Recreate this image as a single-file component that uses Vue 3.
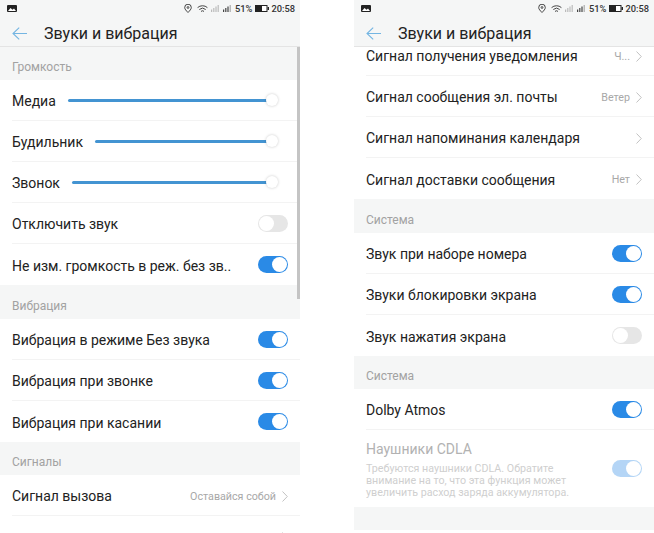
<script setup>
const volumeRows = [
  { label: 'Медиа', type: 'slider' },
  { label: 'Будильник', type: 'slider' },
  { label: 'Звонок', type: 'slider' },
  { label: 'Отключить звук', type: 'toggle', on: false },
  { label: 'Не изм. громкость в реж. без зв..', type: 'toggle', on: true }
]

const vibrationRows = [
  { label: 'Вибрация в режиме Без звука', type: 'toggle', on: true },
  { label: 'Вибрация при звонке', type: 'toggle', on: true },
  { label: 'Вибрация при касании', type: 'toggle', on: true }
]

const signalRows = [
  { label: 'Сигнал получения уведомления', value: 'Ч...' },
  { label: 'Сигнал сообщения эл. почты', value: 'Ветер' },
  { label: 'Сигнал напоминания календаря', value: '' },
  { label: 'Сигнал доставки сообщения', value: 'Нет' }
]

const systemRows = [
  { label: 'Звук при наборе номера', on: true },
  { label: 'Звуки блокировки экрана', on: true },
  { label: 'Звук нажатия экрана', on: false }
]
</script>

<template>
  <div class="page">
    <div v-for="screen in 2" :key="screen" class="phone">
      <header class="top">
        <div class="status">
          <svg class="pic" width="10" height="7" viewBox="0 0 10 7">
            <rect width="10" height="7" rx="1" fill="#222" />
            <path d="M1 6l2.5-3 2 1.8L7 3.5 9 6z" fill="#fff" />
          </svg>
          <svg class="loc" width="8" height="9" viewBox="0 0 8 9" fill="none" stroke="#444" stroke-width="1">
            <path d="M4 8.5C2.2 6.6.7 5.2.7 3.5a3.3 3.3 0 0 1 6.6 0C7.3 5.2 5.8 6.6 4 8.5z" />
            <circle cx="4" cy="3.5" r=".9" />
          </svg>
          <svg class="wifi" width="11" height="8" viewBox="0 0 11 8" fill="none" stroke="#444" stroke-width="1">
            <path d="M.6 2.6a7.4 7.4 0 0 1 9.8 0M2.3 4.5a4.8 4.8 0 0 1 6.4 0M4 6.4a2.3 2.3 0 0 1 3 0" />
          </svg>
          <svg class="sig" width="10" height="7" viewBox="0 0 10 7" fill="#bbb">
            <rect x="0" y="4.5" width="1.2" height="2.5" /><rect x="2.2" y="3" width="1.2" height="4" />
            <rect x="4.4" y="1.5" width="1.2" height="5.5" /><rect x="6.6" y="0" width="1.2" height="7" />
          </svg>
          <svg class="sig" width="10" height="7" viewBox="0 0 10 7" fill="#444">
            <rect x="0" y="4.5" width="1.2" height="2.5" /><rect x="2.2" y="3" width="1.2" height="4" />
            <rect x="4.4" y="1.5" width="1.2" height="5.5" /><rect x="6.6" y="0" width="1.2" height="7" fill="#aaa" />
          </svg>
          <span class="stat-text">51%</span>
          <svg class="batt" width="14" height="7" viewBox="0 0 14 7">
            <rect x=".5" y=".5" width="11.5" height="6" fill="#fff" stroke="#222" />
            <rect x="1" y="1" width="6" height="5" fill="#222" />
            <rect x="12.5" y="2" width="1.5" height="3" fill="#222" />
          </svg>
          <span class="stat-text">20:58</span>
        </div>
        <div class="bar">
          <svg width="15" height="13" viewBox="0 0 15 13" fill="none" stroke="#74b5e2" stroke-width="1.1">
            <path d="M15 6.5H1M7.2.6 1 6.5l6.2 5.9" />
          </svg>
          <span class="title">Звуки и вибрация</span>
        </div>
      </header>

      <main v-if="screen === 1" class="list">
        <div class="scrollbar"></div>
        <div class="section">Громкость</div>
        <div v-for="row in volumeRows" :key="row.label" class="row">
          <span class="label">{{ row.label }}</span>
          <div v-if="row.type === 'slider'" class="slider"><i class="knob"></i></div>
          <span v-else class="switch" :class="{ on: row.on }"><i></i></span>
        </div>
        <div class="section tall">Вибрация</div>
        <div v-for="row in vibrationRows" :key="row.label" class="row">
          <span class="label">{{ row.label }}</span>
          <span class="switch on"><i></i></span>
        </div>
        <div class="section">Сигналы</div>
        <div class="row">
          <span class="label">Сигнал вызова</span>
          <span class="value">Оставайся собой</span>
          <svg class="chevron" width="6" height="11" viewBox="0 0 6 11" fill="none" stroke="#c2c2c2">
            <path d="M.5.5 5.3 5.5.5 10.5" />
          </svg>
        </div>
        <div class="row">
          <svg class="chevron alone" width="6" height="11" viewBox="0 0 6 11" fill="none" stroke="#c2c2c2">
            <path d="M.5.5 5.3 5.5.5 10.5" />
          </svg>
        </div>
      </main>

      <main v-else class="list">
        <div class="scrolled">
          <div v-for="row in signalRows" :key="row.label" class="row">
            <span class="label">{{ row.label }}</span>
            <span v-if="row.value" class="value">{{ row.value }}</span>
            <svg class="chevron" :class="{ alone: !row.value }" width="6" height="11" viewBox="0 0 6 11" fill="none" stroke="#c2c2c2">
              <path d="M.5.5 5.3 5.5.5 10.5" />
            </svg>
          </div>
          <div class="section tall">Система</div>
          <div v-for="row in systemRows" :key="row.label" class="row">
            <span class="label">{{ row.label }}</span>
            <span class="switch" :class="{ on: row.on }"><i></i></span>
          </div>
          <div class="section">Система</div>
          <div class="row">
            <span class="label">Dolby Atmos</span>
            <span class="switch on"><i></i></span>
          </div>
          <div class="row cdla">
            <div class="cdla-text">
              <div class="label">Наушники CDLA</div>
              <p>Требуются наушники CDLA. Обратите внимание на то, что эта функция может увеличить расход заряда аккумулятора.</p>
            </div>
            <span class="switch on"><i></i></span>
          </div>
          <div class="tail"></div>
        </div>
      </main>
    </div>
  </div>
</template>

<style>
html,
body {
  margin: 0;
  background: #fff;
}
</style>

<style scoped>
.page {
  width: 654px;
  height: 533px;
  display: flex;
  justify-content: space-between;
  overflow: hidden;
  font-family: Roboto, "Noto Sans", sans-serif;
  color: #222;
}

.phone {
  width: 300px;
  height: 533px;
  display: flex;
  flex-direction: column;
}

.top {
  height: 46px;
  flex: none;
  background: #f5f6f6;
  border-bottom: 1px solid #e4e4e4;
}

.status {
  height: 17px;
  display: flex;
  align-items: center;
  padding: 0 5px 0 7px;
  font-size: 9.3px;
  color: #333;
}

.pic {
  margin-right: auto;
}

.loc {
  margin-right: 5px;
}

.wifi {
  margin-right: 3px;
}

.sig {
  margin-right: 2px;
}

.batt {
  margin: 0 2px 0 3px;
}

.stat-text {
  font-weight: 500;
}

.bar {
  height: 29px;
  display: flex;
  align-items: center;
  padding: 3px 0 0 12px;
  box-sizing: border-box;
}

.title {
  margin-left: 17px;
  font-size: 16px;
  color: #222;
}

.list {
  position: relative;
  flex: 1;
  min-height: 0;
  overflow: hidden;
  background: #fff;
}

.scrollbar {
  position: absolute;
  right: 0;
  top: 0;
  width: 3px;
  height: 252px;
  background: #c4c4c4;
  z-index: 1;
}

.scrolled {
  margin-top: -12px;
}

.section {
  height: 33px;
  box-sizing: border-box;
  padding: 7px 0 0 12px;
  display: flex;
  align-items: center;
  background: #f5f6f6;
  font-size: 12px;
  color: #a2a2a2;
}

.section.tall {
  height: 34px;
}

.row {
  height: 41px;
  box-sizing: border-box;
  margin-left: 12px;
  padding: 2px 12px 0 0;
  display: flex;
  align-items: center;
  border-bottom: 1px solid #f3f3f3;
}

.row:has(+ .section),
.row:has(+ .tail) {
  border-bottom: none;
}

.label {
  font-size: 14px;
  white-space: nowrap;
  color: #222;
}

.slider {
  position: relative;
  flex: 1;
  height: 3px;
  margin: 0 16px 2px 12px;
  background: #4394d2;
  border-radius: 2px;
}

.knob {
  position: absolute;
  right: -6px;
  top: -4.5px;
  width: 12px;
  height: 12px;
  border-radius: 50%;
  background: #fff;
  box-shadow: 0 0 3px rgba(0, 0, 0, 0.22);
}

.switch {
  width: 30px;
  height: 17px;
  margin: 0 0 2px auto;
  flex: none;
  padding: 1px;
  box-sizing: border-box;
  display: flex;
  border-radius: 9px;
  background: #e6e6e6;
}

.switch i {
  width: 15px;
  height: 15px;
  border-radius: 50%;
  background: #fff;
}

.switch.on {
  justify-content: flex-end;
  background: #2a8ae6;
}

.value {
  margin-left: auto;
  font-size: 10.7px;
  color: #a8a8a8;
}

.chevron {
  flex: none;
  margin-left: 6px;
}

.chevron.alone {
  margin-left: auto;
}

.cdla {
  height: 77px;
  border-bottom: none;
}

.cdla .label {
  color: #b2b2b2;
}

.cdla p {
  margin: 6px 0 0;
  width: 212px;
  font-size: 10.7px;
  line-height: 12px;
  color: #cfcfcf;
}

.cdla .switch {
  opacity: 0.35;
}

.tail {
  height: 23px;
  background: #f5f6f6;
}
</style>
